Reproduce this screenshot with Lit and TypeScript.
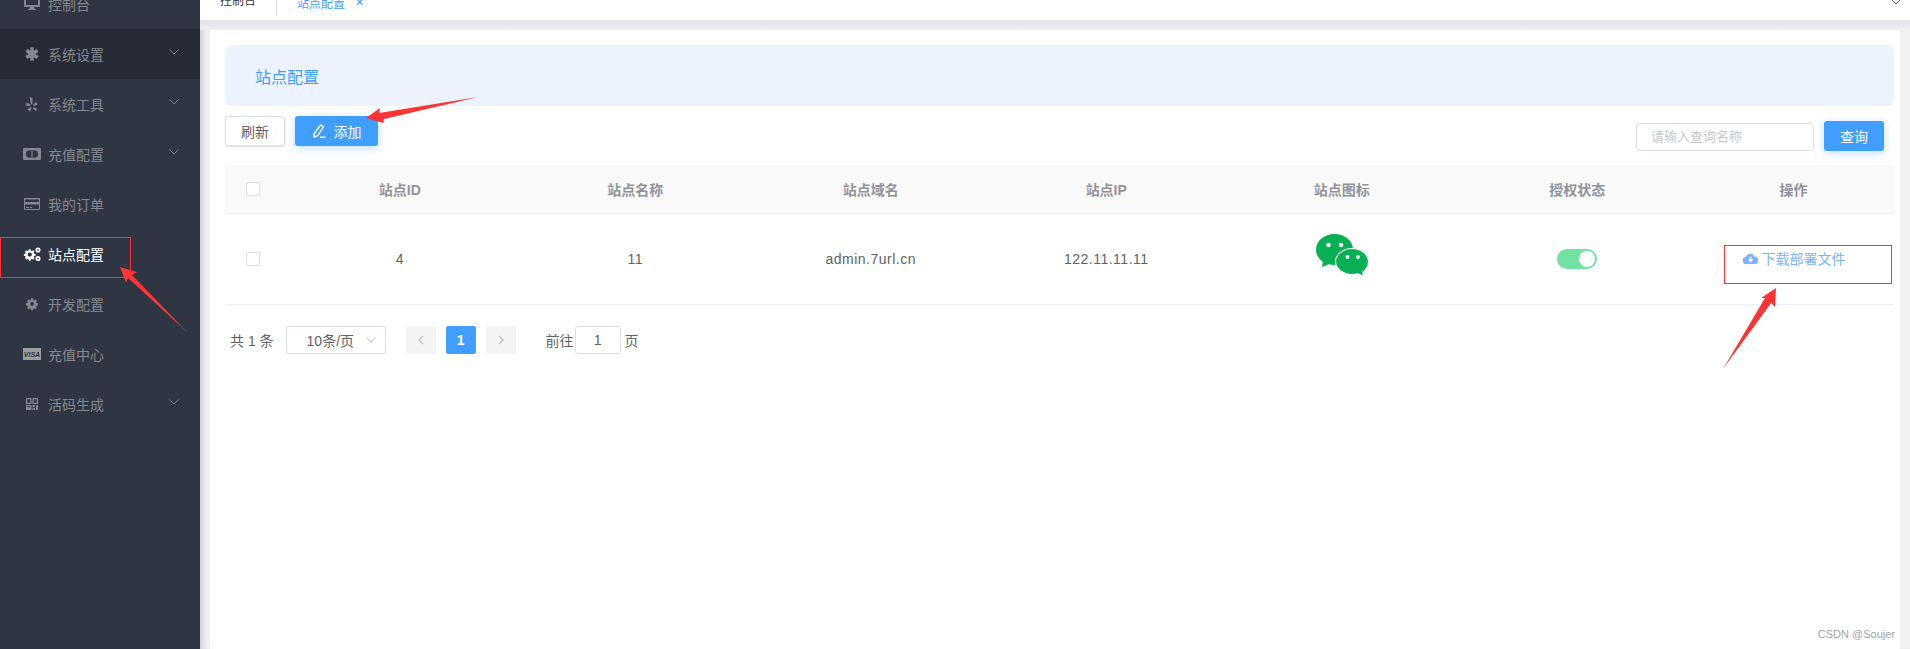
import { LitElement, html, css, svg } from "lit";
import { customElement } from "lit/decorators.js";

const chevron = html`<svg class="chev" viewBox="0 0 12 8" width="12" height="8"><path d="M1.500 1.500 6 6l4.500-4.500" fill="none" stroke="currentColor" stroke-width="1"/></svg>`;

const gearPath = "M6.700 1h2.600l.4 2 1.300.6 1.800-1.100 1.800 1.800-1.100 1.800.6 1.300 2 .4v2.400l-2 .4-.6 1.300 1.100 1.800-1.800 1.800-1.800-1.100-1.300.6-.4 2H6.700l-.4-2-1.300-.6-1.800 1.100-1.800-1.800 1.100-1.800-.6-1.300-2-.4V7.800l2-.4.6-1.300-1.100-1.800 1.800-1.800 1.800 1.100 1.300-.6z";

const icons: Record<string, unknown> = {
  desktop: svg`<path fill="currentColor" fill-rule="evenodd" d="M2 0h14a1 1 0 0 1 1 1v9a1 1 0 0 1-1 1h-5l.5 2H13v1H5v-1h1.500L7 11H2a1 1 0 0 1-1-1V1a1 1 0 0 1 1-1zm1 2v7h12V2z"/>`,
  asterisk: svg`<g transform="translate(3 2)"><path fill="currentColor" stroke="currentColor" stroke-width="1.500" d="M5 0h2v4l3.500-2 1 1.700L8 6l3.500 2.300-1 1.700L7 8v4H5V8l-3.500 2-1-1.700L4 6 .5 3.700l1-1.700L5 4z"/></g>`,
  yelp: svg`<g transform="translate(3 1)" fill="currentColor"><path d="M3.500 0l3 .8-.2 6.200-1.300.3zM.3 5.500l4 1.800-.3 1.700-3.800-.3zM1.300 12.500 4.600 10l1 1.100-1.300 3.400zM7.500 10.200l3.600 1.200-1.100 2.900-3.200-2.800zM7.200 7.500l3-2.500 1.500 2.400-3.900 1.500z"/></g>`,
  money: svg`<rect x="0" y="2" width="18" height="12" rx="1" fill="currentColor"/><circle cx="6.800" cy="8" r="3.800" fill="#2f3542"/><circle cx="11.200" cy="8" r="3.800" fill="#2f3542"/><rect x="8.500" y="5" width="1" height="6" fill="#85888e"/>`,
  card: svg`<path fill="currentColor" fill-rule="evenodd" d="M2 2h14a1 1 0 0 1 1 1v10a1 1 0 0 1-1 1H2a1 1 0 0 1-1-1V3a1 1 0 0 1 1-1zm0 1.500V6h14V3.500zm0 5V13h14V8.500zM3 11h3v1H3zm4 0h2v1H7z"/>`,
  cogs: svg`<g transform="translate(1 2.500) scale(.72)" fill="currentColor"><path fill-rule="evenodd" d="${gearPath}M8 5.500a3 3 0 1 0 0 6 3 3 0 0 0 0-6z"/></g><circle cx="15" cy="4" r="1.700" fill="none" stroke="currentColor" stroke-width="1.700"/><circle cx="15" cy="12.500" r="1.700" fill="none" stroke="currentColor" stroke-width="1.700"/>`,
  gear: svg`<g transform="translate(3 1.500) scale(.75)" fill="currentColor"><path fill-rule="evenodd" d="${gearPath}M8 6a2.500 2.500 0 1 0 0 5 2.500 2.500 0 0 0 0-5z"/></g>`,
  visa: svg`<rect width="18" height="12" y="2" fill="#9b9da2"/><text x="9" y="11" text-anchor="middle" class="visa">VISA</text>`,
  qr: svg`<path fill="currentColor" fill-rule="evenodd" d="M3 2h5.500v6H3zm1.300 1.300v3.400h2.900V3.300zM9.500 2H15v6H9.500zm1.300 1.300v3.400h2.900V3.300zM3 9h5.500v5H3zm1.300 1.300v1h2.900v-1zM9.500 9H12v2.200H9.500zm0 3H12v2H9.500zM13 9h2v5h-2z"/>`,
};

const menu: { icon: string; label: string; arrow?: boolean; state?: string }[] = [
  { icon: "desktop", label: "控制台" },
  { icon: "asterisk", label: "系统设置", arrow: true, state: "hover" },
  { icon: "yelp", label: "系统工具", arrow: true },
  { icon: "money", label: "充值配置", arrow: true },
  { icon: "card", label: "我的订单" },
  { icon: "cogs", label: "站点配置", state: "active" },
  { icon: "gear", label: "开发配置" },
  { icon: "visa", label: "充值中心" },
  { icon: "qr", label: "活码生成", arrow: true },
];

@customElement("app-root")
export class AppRoot extends LitElement {
  static styles = css`
    :host { display: block; width: 1910px; height: 649px; overflow: hidden; position: relative; background: #fff;
      font-family: "Liberation Sans", "Noto Sans CJK SC", sans-serif; font-size: 14px; color: #606266; }
    .shell { display: flex; height: 649px; }
    .side { width: 200px; flex: none; background: #2f3542; overflow: hidden; color: #85888e; }
    .menu { margin-top: -21px; }
    .mi { height: 50px; display: flex; align-items: center; padding-left: 23px; gap: 7px; }
    .mi.hover { background: #272b35; }
    .mi.active { color: #fff; }
    .mi .ico { width: 18px; height: 16px; flex: none; }
    .mi .lbl { flex: 1; }
    .chev { color: #7d8087; margin-right: 20px; margin-top: -4px; }
    .visa { font: italic bold 7px "Liberation Sans", sans-serif; fill: #2f3542; }
    .main { flex: 1; min-width: 0; display: flex; flex-direction: column; background: #f1f1f4; box-shadow: inset 6px 0 6px -4px #c4c4cc; }
    .tabs { height: 20px; flex: none; background: #fff; overflow: hidden; display: flex; position: relative; }
    .tabs .inner { display: flex; align-items: center; height: 30px; margin-top: -13px; font-size: 12px; }
    .tab1 { padding: 0 20px; color: #333; border-right: 1px solid #dcdfe6; line-height: 30px; height: 30px; margin-top: -2px; }
    .tab2 { padding-left: 20px; color: #409eff; display: flex; gap: 10px; align-items: center; }
    .tab2 span { color: #409eff; font-size: 11px; }
    .tabs .chev { position: absolute; right: 8px; top: -2px; color: #666; margin: 0; }
    .band { height: 10px; flex: none; background: linear-gradient(#e2e2e7, #efeff2); }
    .body { flex: 1; min-height: 0; display: flex; padding: 0 10px; }
    .card { flex: 1; background: #fff; padding: 15px 6px 0 15px; min-width: 0; }
    .alert { height: 61px; background: #ecf3fe; border-radius: 6px; display: flex; align-items: center; padding-left: 30px; font-size: 16px; color: #409eff; }
    .toolbar { display: flex; align-items: flex-start; margin-top: 9px; height: 50px; padding-right: 10px; }
    .btn { height: 30px; border-radius: 3px; display: flex; align-items: center; justify-content: center; box-sizing: border-box; }
    .refresh { width: 60px; border: 1px solid #dcdfe6; color: #606266; box-shadow: 0 1px 2px rgba(0,0,0,.12); margin-top: 1px; }
    .add { width: 83px; margin: 1px 0 0 10px; background: #409eff; color: #fff; gap: 8px; box-shadow: 0 2px 8px rgba(64,158,255,.35); }
    .spacer { flex: 1; }
    .search { width: 178px; height: 28px; box-sizing: border-box; border: 1px solid #dcdfe6; border-radius: 4px; margin-top: 8px; padding-left: 14px; font-size: 13px; line-height: 26px; color: #c6c8cf; }
    .query { width: 60px; margin: 6px 0 0 10px; background: #409eff; color: #fff; box-shadow: 0 2px 8px rgba(64,158,255,.35); }
    .row { display: grid; grid-template-columns: 57px repeat(6, 235.500px) 1fr; align-items: center; text-align: center; border-bottom: 1px solid #ebeef5; }
    .head { height: 48px; background: #f9f9f9; font-weight: 700; color: #909399; }
    .head .last { margin-left: -2px; }
    .data { height: 90px; }
    .wide { letter-spacing: .5px; }
    .cb { width: 14px; height: 14px; box-sizing: border-box; border: 1px solid #dcdfe6; border-radius: 2px; background: #fff; margin-left: 21px; }
    .sw { display: inline-block; width: 40px; height: 20px; border-radius: 10px; background: #72e2a3; position: relative; vertical-align: middle; }
    .sw i { position: absolute; right: 2px; top: 2px; width: 16px; height: 16px; border-radius: 50%; background: #fff; }
    .wx { display: block; margin: -8px auto 0; }
    .dl { color: #79b4ff; display: flex; align-items: center; justify-content: center; gap: 4px; margin: -2px 0 0 -1px; }
    .pager { display: flex; align-items: center; margin-top: 20px; padding-left: 5px; height: 29px; }
    .sel { width: 100px; height: 28px; box-sizing: border-box; border: 1px solid #dcdfe6; border-radius: 3px; margin-left: 12px; display: flex; align-items: center; justify-content: space-between; padding: 0 5px 0 20px; }
    .sel .chev { color: #c0c4cc; margin: 0 3px 0 0; }
    .pg { width: 30px; height: 28px; border-radius: 2px; background: #f4f4f5; display: flex; align-items: center; justify-content: center; margin-left: 10px; color: #c0c4cc; }
    .pg.first { margin-left: 20px; }
    .pg.on { background: #409eff; color: #fff; font-weight: 700; }
    .goto { margin-left: 30px; }
    .jump { width: 46px; height: 28px; box-sizing: border-box; border: 1px solid #dcdfe6; border-radius: 3px; margin: 0 4px 0 1px; text-align: center; line-height: 26px; }
    .marks { position: absolute; left: 0; top: 0; pointer-events: none; }
    .wm { position: absolute; right: 15px; bottom: 9px; font-size: 11px; color: #a3a3a3; }
  `;

  render() {
    return html`
      <div class="shell">
        <aside class="side">
          <div class="menu">
            ${menu.map(
              (m) => html`<div class="mi ${m.state ?? ""}">
                <svg class="ico" viewBox="0 0 18 16">${icons[m.icon]}</svg>
                <span class="lbl">${m.label}</span>
                ${m.arrow ? chevron : ""}
              </div>`
            )}
          </div>
        </aside>
        <main class="main">
          <div class="tabs">
            <div class="inner">
              <div class="tab1">控制台</div>
              <div class="tab2">站点配置 <span>✕</span></div>
            </div>
            ${chevron}
          </div>
          <div class="band"></div>
          <div class="body">
            <div class="card">
              <div class="alert">站点配置</div>
              <div class="toolbar">
                <div class="btn refresh">刷新</div>
                <div class="btn add">
                  <svg viewBox="0 0 14 14" width="14" height="14"><path d="M8.500 1l3 1.800L5.500 12l-3.500 1 .3-3.400zM8 13.300h5.500" fill="none" stroke="#fff" stroke-width="1.400"/></svg>
                  添加
                </div>
                <div class="spacer"></div>
                <div class="search">请输入查询名称</div>
                <div class="btn query">查询</div>
              </div>
              <div class="row head">
                <div class="cb"></div>
                <div>站点ID</div><div>站点名称</div><div>站点域名</div><div>站点IP</div><div>站点图标</div><div>授权状态</div><div class="last">操作</div>
              </div>
              <div class="row data">
                <div class="cb"></div>
                <div>4</div><div class="wide">11</div><div class="wide">admin.7url.cn</div><div class="wide">122.11.11.11</div>
                <div>
                  <svg class="wx" viewBox="0 0 52 43" width="52" height="43">
                    <path fill="#07b053" d="M18.500 0C28.700 0 37 7 37 15.500S28.700 31 18.500 31c-2 0-4-.3-5.800-.8L6 33l.8-5.300C2.700 25 0 20.500 0 15.500 0 7 8.300 0 18.500 0z"/>
                    <circle cx="12.500" cy="11" r="2.300" fill="#fff"/><circle cx="25" cy="11" r="2.300" fill="#fff"/>
                    <path fill="#07b053" stroke="#fff" stroke-width="1.200" d="M36 14.500c9 0 16.500 5.800 16.500 13.300 0 4.400-2.300 8-5.700 10.200l.7 4.500-5.300-2.700c-2 .5-4 .8-6.200.8-9 0-16.500-5.800-16.500-12.800S27 14.500 36 14.500z"/>
                    <circle cx="31.500" cy="23" r="1.900" fill="#fff"/><circle cx="42" cy="23" r="1.900" fill="#fff"/>
                  </svg>
                </div>
                <div><span class="sw"><i></i></span></div>
                <div class="dl">
                  <svg viewBox="0 0 16 14" width="15" height="13"><path fill="#79b4ff" d="M12.500 5A5 5 0 0 0 3 5.500 3.500 3.500 0 0 0 3.500 13h9a3.500 3.500 0 0 0 0-8z"/><path fill="#fff" d="M7 5h2v3h2l-3 3.200L5 8h2z"/></svg>
                  下载部署文件
                </div>
              </div>
              <div class="pager">
                <span>共 1 条</span>
                <div class="sel">10条/页 ${chevron}</div>
                <div class="pg first"><svg viewBox="0 0 8 12" width="8" height="12"><path d="M6 2 2 6l4 4" fill="none" stroke="currentColor" stroke-width="1.500"/></svg></div>
                <div class="pg on">1</div>
                <div class="pg"><svg viewBox="0 0 8 12" width="8" height="12"><path d="M2 2l4 4-4 4" fill="none" stroke="currentColor" stroke-width="1.500"/></svg></div>
                <span class="goto">前往</span>
                <div class="jump">1</div>
                <span>页</span>
              </div>
            </div>
          </div>
        </main>
      </div>
      <svg class="marks" width="1910" height="649" viewBox="0 0 1910 649">
        <rect x="0.500" y="237.500" width="130" height="40" fill="none" stroke="#f33" stroke-width="1"/>
        <rect x="1724.500" y="245.500" width="167" height="38" fill="none" stroke="#f33" stroke-width="1"/>
        <path fill="#f33" d="M120 267l17 5-5 3 56 58-60-55-2 5z"/>
        <path fill="#f33" d="M1776 288l-1 19-4-4-48 66 42-71-4 0z"/>
        <path fill="#f33" d="M366 118l14-10-1 5 99-16-94 22-1 4z"/>
      </svg>
      <div class="wm">CSDN @Soujer</div>
    `;
  }
}
